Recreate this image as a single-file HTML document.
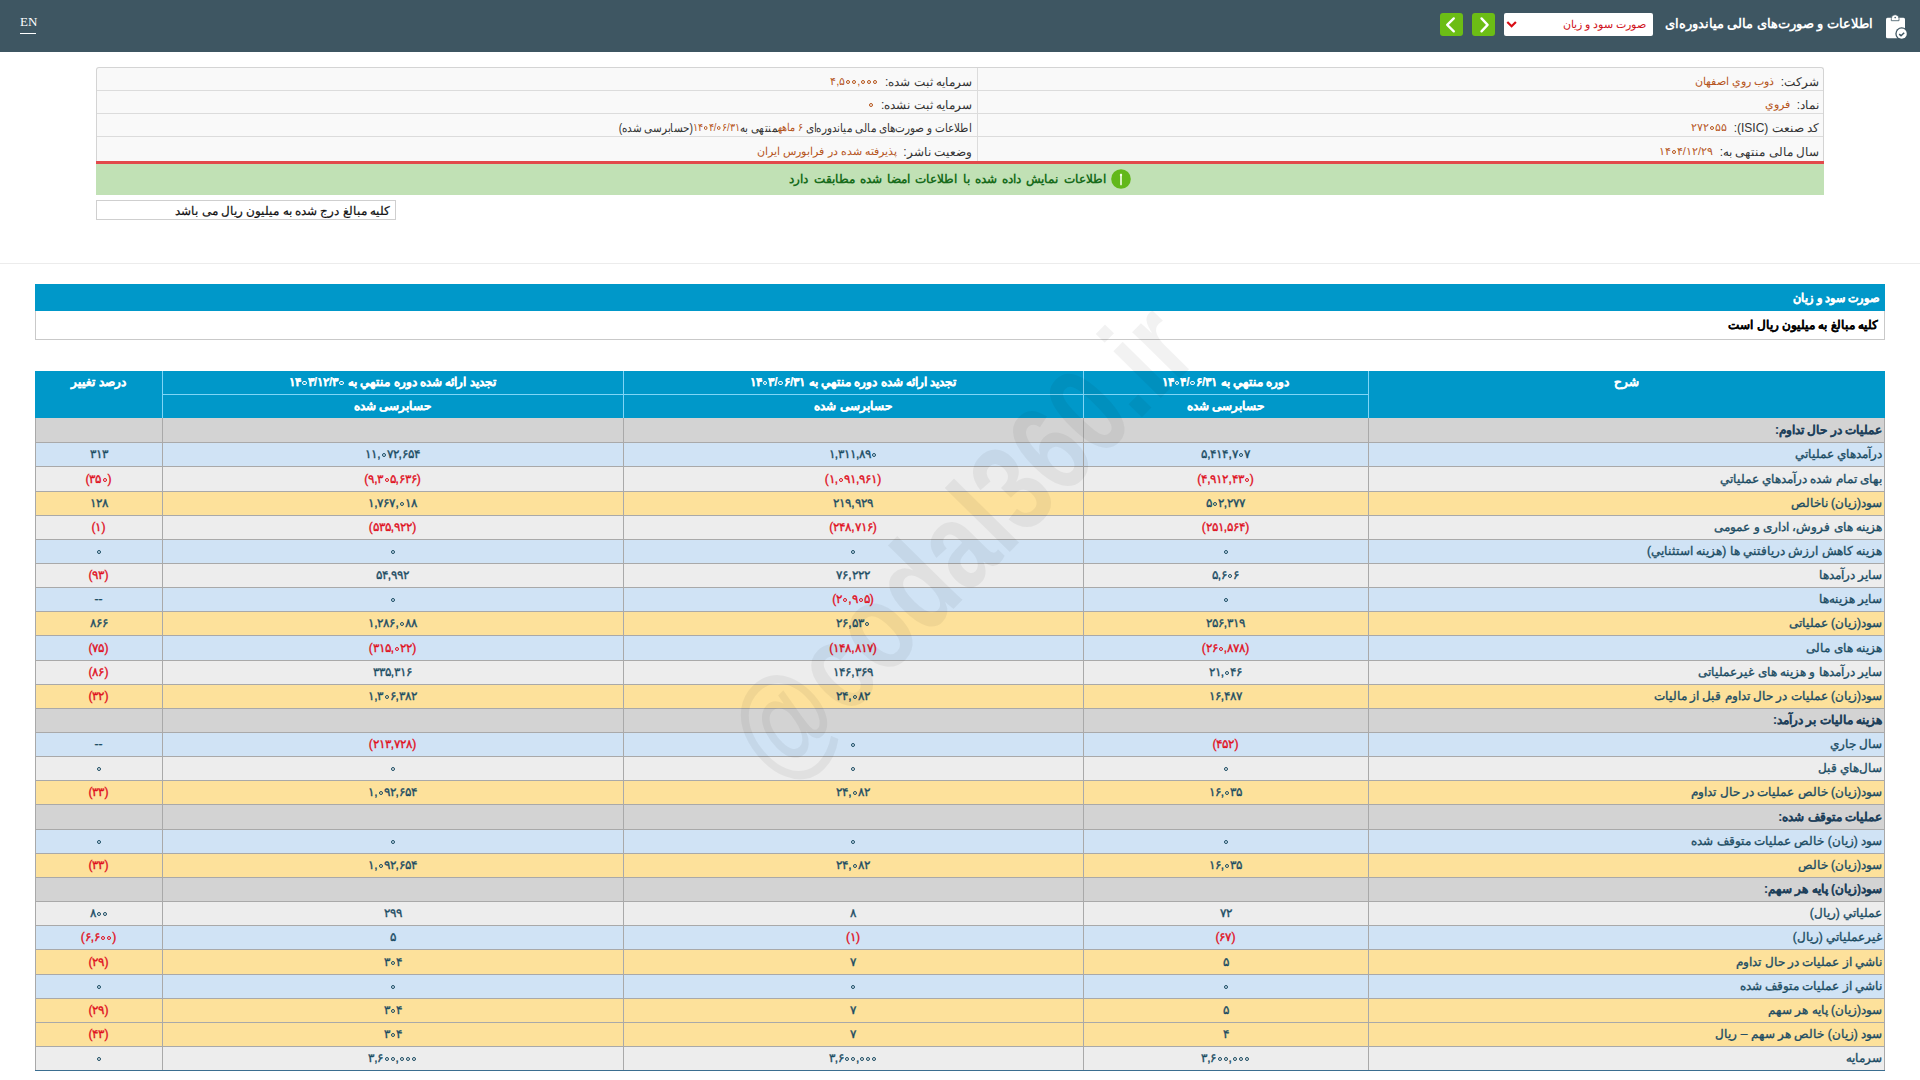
<!DOCTYPE html>
<html lang="fa" dir="rtl">
<head>
<meta charset="utf-8">
<title>صورت سود و زیان</title>
<style>
*{box-sizing:border-box;margin:0;padding:0}
html,body{width:1920px;height:1080px;overflow:hidden;background:#fff}
body{font-family:"Liberation Sans",sans-serif;font-size:12px;color:#222;position:relative}
.abs{position:absolute}
/* top bar */
#topbar{position:absolute;left:0;top:0;width:1920px;height:52px;background:#3e5662}
#en{position:absolute;left:20px;top:15px;line-height:14px;font-family:"Liberation Serif",serif;font-size:13px;color:#fff;direction:ltr}
#enline{position:absolute;left:20px;top:33px;width:16px;height:1px;background:#fff}
#ttl{position:absolute;right:47px;top:12px;font-size:13px;font-weight:bold;color:#fff;white-space:nowrap;line-height:24px}
#sel{position:absolute;left:1504px;top:13px;width:149px;height:23px;background:#fff;border-radius:2px}
#seltxt{position:absolute;right:7px;top:0;line-height:23px;font-size:11px;color:#d0101a;white-space:nowrap}
.gbtn{position:absolute;top:13px;width:23px;height:23px;background:#6cbd15;border-radius:3px}
/* info */
#info{position:absolute;left:96px;top:67px;width:1728px;height:97px;background:#f9f9f9;border:1px solid #d4d4d4;border-bottom:none;border-radius:3px 3px 0 0}
.ir{position:absolute;left:0;width:1726px;height:1px;background:#dcdcdc}
#ivd{position:absolute;left:880px;top:0;width:1px;height:96px;background:#dcdcdc}
.it{position:absolute;white-space:nowrap;font-size:12px;color:#333;line-height:23px;margin-top:1.5px}
.it .z{width:4px;height:4px;border-width:1.2px}
.br{color:#b5541a;font-size:11px;vertical-align:1px}
#red{position:absolute;left:96px;top:161px;width:1728px;height:3px;background:#e2494b}
#green{position:absolute;left:96px;top:164px;width:1728px;height:31px;background:#c1e1b5}
#gtxt{position:absolute;left:0;width:1728px;top:-0.5px;line-height:31px;text-align:center;font-size:12px;word-spacing:1.9px;font-weight:bold;color:#176c1b;white-space:nowrap}
#note{position:absolute;left:96px;top:200px;width:300px;height:20px;border:1px solid #cfcfcf;background:#fff}
#notetxt{position:absolute;right:5px;top:1px;line-height:18px;font-size:12px;color:#111;-webkit-text-stroke:0.2px #111;white-space:nowrap}
#sep{position:absolute;left:0;top:263px;width:1920px;height:1px;background:#ececec}
/* title */
#tbar{position:absolute;left:35px;top:284px;width:1850px;height:27px;background:#0098c9}
#tbartxt{position:absolute;right:6px;top:1px;line-height:27px;font-size:12px;font-weight:bold;color:#fff;-webkit-text-stroke:0.25px #fff;transform:scaleX(0.935);transform-origin:right center;white-space:nowrap}
#tsub{position:absolute;left:35px;top:311px;width:1850px;height:29px;border:1px solid #c9c9c9;border-top:none;background:#fff}
#tsubtxt{position:absolute;right:6px;top:0;line-height:28px;font-size:12px;font-weight:bold;color:#000;-webkit-text-stroke:0.1px #000;white-space:nowrap}
/* table */
#thead{position:absolute;left:35px;top:371px;width:1850px;height:47px;background:#0098c9}
.hl{position:absolute;background:#7fd5f6}
.ht .z{width:4.5px;height:4.5px;border-width:1.5px;vertical-align:1px}
.ht{position:absolute;color:#fff;font-weight:bold;font-size:12px;-webkit-text-stroke:0.2px #fff;text-align:center;white-space:nowrap;line-height:23px}
.row{position:absolute;left:35px;width:1850px}
.hb{position:absolute;left:35px;width:1850px;height:1px;background:#a9a9a9}
.z{display:inline-block;width:4px;height:4px;border:1.5px solid currentColor;border-radius:50%;vertical-align:1px;margin:0 1px}
.rg{background:#d3d3d3}
.rb{background:#d0e3f5}
.rl{background:#ededed}
.ry{background:#fde19b}
.c{position:absolute;top:0;height:100%;text-align:center;white-space:nowrap;color:#1b4c63;font-size:12px;-webkit-text-stroke:0.35px currentColor}
.c1{left:0;width:127px}
.c2{left:127px;width:461px}
.c3{left:588px;width:460px}
.c4{left:1048px;width:285px}
.c5{left:1333px;width:517px;text-align:right;padding-right:3px}
.c5 b{color:#1d3f5a;-webkit-text-stroke:0.15px currentColor}
.neg{color:#e0101e}
.vl{position:absolute;top:418px;height:652px;width:1px;background:#a9a9a9}
#tbot{position:absolute;left:35px;top:1070px;width:1850px;height:1px;background:#3b6e90}
#wm{position:absolute;left:960px;top:541px;transform:translate(-50%,-50%) rotate(-45.5deg) scaleX(0.77);font-size:126px;line-height:126px;font-weight:bold;color:rgba(0,0,0,0.052);white-space:nowrap;direction:ltr;font-family:"Liberation Sans",sans-serif}
</style>
</head>
<body>
<div id="topbar">
  <div id="en">EN</div><div id="enline"></div>
  <div id="ttl">اطلاعات و صورت‌های مالی میاندوره‌ای</div>
  <div id="sel"><div id="seltxt">صورت سود و زیان</div>
    <svg class="abs" style="left:2px;top:7px" width="11" height="9" viewBox="0 0 11 9"><path d="M1.3 2 L5.6 6.3 L9.9 2" stroke="#d80c14" stroke-width="2.2" fill="none"/></svg>
  </div>
  <div class="gbtn" style="left:1472px"><svg width="23" height="23" viewBox="0 0 23 23"><path d="M9.5 5.4 L15.6 11.9 L9.5 18.4" stroke="#fff" stroke-width="2.3" stroke-linecap="round" stroke-linejoin="round" fill="none"/></svg></div>
  <div class="gbtn" style="left:1440px"><svg width="23" height="23" viewBox="0 0 23 23"><path d="M13.8 5.4 L7.2 11.9 L13.8 18.4" stroke="#fff" stroke-width="2.3" stroke-linecap="round" stroke-linejoin="round" fill="none"/></svg></div>
  <svg class="abs" style="left:1876px;top:8px" width="40" height="36" viewBox="0 0 40 36">
    <rect x="10" y="9.7" width="19" height="20.6" rx="1.5" fill="#fff"/>
    <path d="M15.3 12.7 V10.5 a3.85 3.85 0 0 1 7.7 0 V12.7 z" fill="#fff" stroke="#3e5662" stroke-width="0.8"/>
    <circle cx="19.15" cy="9.6" r="0.8" fill="#3e5662"/>
    <circle cx="25.7" cy="25.7" r="6.4" fill="#3e5662"/>
    <circle cx="25.7" cy="25.7" r="5.1" fill="#fff"/>
    <path d="M23.2 26.2 l1.8 1.5 l3.2 -3" stroke="#3e5662" stroke-width="1.5" fill="none"/>
  </svg>
</div>

<div id="info">
  <div class="ir" style="top:22px"></div>
  <div class="ir" style="top:45px"></div>
  <div class="ir" style="top:68px"></div>
  <div id="ivd"></div>
  <div class="it" style="right:4px;top:0">شرکت: &nbsp;<span class="br">ذوب روي اصفهان</span></div>
  <div class="it" style="right:4px;top:23px">نماد: &nbsp;<span class="br">فروي</span></div>
  <div class="it" style="right:4px;top:46px">کد صنعت (ISIC): &nbsp;<span class="br"><bdo dir="ltr">۲۷۲<i class="z"></i>۵۵</bdo></span></div>
  <div class="it" style="right:4px;top:70px">سال مالی منتهی به: &nbsp;<span class="br"><bdo dir="ltr">۱۴<i class="z"></i>۴/۱۲/۲۹</bdo></span></div>
  <div class="it" style="right:851px;top:0">سرمایه ثبت شده: &nbsp;<span class="br"><bdo dir="ltr">۴,۵<i class="z"></i><i class="z"></i>,<i class="z"></i><i class="z"></i><i class="z"></i></bdo></span></div>
  <div class="it" style="right:851px;top:23px">سرمایه ثبت نشده: &nbsp;<span class="br"><i class="z"></i></span></div>
  <div class="it" style="right:851px;top:46px;transform:scaleX(0.87);transform-origin:right center">اطلاعات و صورت‌های مالی میاندوره‌ای <span class="br">۶ ماهه</span>منتهی به<span class="br"><bdo dir="ltr">۱۴<i class="z"></i>۴/<i class="z"></i>۶/۳۱</bdo></span>(حسابرسی شده)</div>
  <div class="it" style="right:851px;top:70px">وضعیت ناشر: &nbsp;<span class="br">پذیرفته شده در فرابورس ایران</span></div>
</div>
<div id="red"></div>
<div id="green"><div id="gtxt"><svg style="vertical-align:middle;margin-left:5px;position:relative;top:-0.5px" width="20" height="20" viewBox="0 0 20 20"><circle cx="10" cy="10" r="9.8" fill="#62b81a"/><path d="M10 5.6 V15.6" stroke="#f4ffe8" stroke-width="1.6" stroke-linecap="round"/><circle cx="10" cy="6" r="1.2" fill="#f4ffe8"/></svg>اطلاعات نمایش داده شده با اطلاعات امضا شده مطابقت دارد</div></div>
<div id="note"><div id="notetxt">کلیه مبالغ درج شده به میلیون ریال می باشد</div></div>
<div id="sep"></div>

<div id="tbar"><div id="tbartxt">صورت سود و زیان</div></div>
<div id="tsub"><div id="tsubtxt">کلیه مبالغ به میلیون ریال است</div></div>

<div id="thead">
  <div class="hl" style="left:127px;top:23px;width:1206px;height:1px"></div>
  <div class="hl" style="left:127px;top:0;width:1px;height:47px"></div>
  <div class="hl" style="left:588px;top:0;width:1px;height:47px"></div>
  <div class="hl" style="left:1048px;top:0;width:1px;height:47px"></div>
  <div class="hl" style="left:1333px;top:0;width:1px;height:47px"></div>
  <div class="ht" style="left:1333px;width:517px;top:0">شرح</div>
  <div class="ht" style="left:1048px;width:285px;top:0">دوره منتهي به <bdo dir="ltr">۱۴<i class="z"></i>۴/<i class="z"></i>۶/۳۱</bdo></div>
  <div class="ht" style="left:1048px;width:285px;top:24px">حسابرسی شده</div>
  <div class="ht" style="left:588px;width:460px;top:0">تجدید ارائه شده دوره منتهي به <bdo dir="ltr">۱۴<i class="z"></i>۳/<i class="z"></i>۶/۳۱</bdo></div>
  <div class="ht" style="left:588px;width:460px;top:24px">حسابرسی شده</div>
  <div class="ht" style="left:127px;width:461px;top:0">تجدید ارائه شده دوره منتهي به <bdo dir="ltr">۱۴<i class="z"></i>۳/۱۲/۳<i class="z"></i></bdo></div>
  <div class="ht" style="left:127px;width:461px;top:24px">حسابرسی شده</div>
  <div class="ht" style="left:0;width:127px;top:0">درصد تغییر</div>
</div>
<div class="row rg" style="top:418px;height:25px;line-height:24px"><div class="c c5"><b>عملیات در حال تداوم:</b></div><div class="c c4"></div><div class="c c3"></div><div class="c c2"></div><div class="c c1"></div></div>
<div class="hb" style="top:442px"></div>
<div class="row rb" style="top:443px;height:24px;line-height:23px"><div class="c c5">درآمدهاي عملياتي</div><div class="c c4"><bdo dir="ltr">۵,۴۱۴,۷<i class="z"></i>۷</bdo></div><div class="c c3"><bdo dir="ltr">۱,۳۱۱,۸۹<i class="z"></i></bdo></div><div class="c c2"><bdo dir="ltr">۱۱,<i class="z"></i>۷۲,۶۵۴</bdo></div><div class="c c1"><bdo dir="ltr">۳۱۳</bdo></div></div>
<div class="hb" style="top:466px"></div>
<div class="row rl" style="top:467px;height:25px;line-height:24px"><div class="c c5">بهای تمام شده درآمدهاي عملياتي</div><div class="c c4"><span class="neg"><bdo dir="ltr">(۴,۹۱۲,۴۳<i class="z"></i>)</bdo></span></div><div class="c c3"><span class="neg"><bdo dir="ltr">(۱,<i class="z"></i>۹۱,۹۶۱)</bdo></span></div><div class="c c2"><span class="neg"><bdo dir="ltr">(۹,۳<i class="z"></i>۵,۶۳۶)</bdo></span></div><div class="c c1"><span class="neg"><bdo dir="ltr">(۳۵<i class="z"></i>)</bdo></span></div></div>
<div class="hb" style="top:491px"></div>
<div class="row ry" style="top:492px;height:24px;line-height:23px"><div class="c c5">سود(زيان) ناخالص</div><div class="c c4"><bdo dir="ltr">۵<i class="z"></i>۲,۲۷۷</bdo></div><div class="c c3"><bdo dir="ltr">۲۱۹,۹۲۹</bdo></div><div class="c c2"><bdo dir="ltr">۱,۷۶۷,<i class="z"></i>۱۸</bdo></div><div class="c c1"><bdo dir="ltr">۱۲۸</bdo></div></div>
<div class="hb" style="top:515px"></div>
<div class="row rl" style="top:516px;height:24px;line-height:23px"><div class="c c5">هزینه های فروش، اداری و عمومی</div><div class="c c4"><span class="neg"><bdo dir="ltr">(۲۵۱,۵۶۴)</bdo></span></div><div class="c c3"><span class="neg"><bdo dir="ltr">(۲۴۸,۷۱۶)</bdo></span></div><div class="c c2"><span class="neg"><bdo dir="ltr">(۵۳۵,۹۲۲)</bdo></span></div><div class="c c1"><span class="neg"><bdo dir="ltr">(۱)</bdo></span></div></div>
<div class="hb" style="top:539px"></div>
<div class="row rb" style="top:540px;height:24px;line-height:23px"><div class="c c5">هزينه کاهش ارزش دريافتني ها (هزينه استثنايي)</div><div class="c c4"><bdo dir="ltr"><i class="z"></i></bdo></div><div class="c c3"><bdo dir="ltr"><i class="z"></i></bdo></div><div class="c c2"><bdo dir="ltr"><i class="z"></i></bdo></div><div class="c c1"><bdo dir="ltr"><i class="z"></i></bdo></div></div>
<div class="hb" style="top:563px"></div>
<div class="row rl" style="top:564px;height:24px;line-height:23px"><div class="c c5">ساير درآمدها</div><div class="c c4"><bdo dir="ltr">۵,۶<i class="z"></i>۶</bdo></div><div class="c c3"><bdo dir="ltr">۷۶,۲۲۲</bdo></div><div class="c c2"><bdo dir="ltr">۵۴,۹۹۲</bdo></div><div class="c c1"><span class="neg"><bdo dir="ltr">(۹۳)</bdo></span></div></div>
<div class="hb" style="top:587px"></div>
<div class="row rb" style="top:588px;height:24px;line-height:23px"><div class="c c5">ساير هزينه‌ها</div><div class="c c4"><bdo dir="ltr"><i class="z"></i></bdo></div><div class="c c3"><span class="neg"><bdo dir="ltr">(۲<i class="z"></i>,۹<i class="z"></i>۵)</bdo></span></div><div class="c c2"><bdo dir="ltr"><i class="z"></i></bdo></div><div class="c c1"><bdo dir="ltr">--</bdo></div></div>
<div class="hb" style="top:611px"></div>
<div class="row ry" style="top:612px;height:24px;line-height:23px"><div class="c c5">سود(زيان) عملياتى</div><div class="c c4"><bdo dir="ltr">۲۵۶,۳۱۹</bdo></div><div class="c c3"><bdo dir="ltr">۲۶,۵۳<i class="z"></i></bdo></div><div class="c c2"><bdo dir="ltr">۱,۲۸۶,<i class="z"></i>۸۸</bdo></div><div class="c c1"><bdo dir="ltr">۸۶۶</bdo></div></div>
<div class="hb" style="top:635px"></div>
<div class="row rb" style="top:636px;height:25px;line-height:24px"><div class="c c5">هزینه های مالی</div><div class="c c4"><span class="neg"><bdo dir="ltr">(۲۶<i class="z"></i>,۸۷۸)</bdo></span></div><div class="c c3"><span class="neg"><bdo dir="ltr">(۱۴۸,۸۱۷)</bdo></span></div><div class="c c2"><span class="neg"><bdo dir="ltr">(۳۱۵,<i class="z"></i>۲۲)</bdo></span></div><div class="c c1"><span class="neg"><bdo dir="ltr">(۷۵)</bdo></span></div></div>
<div class="hb" style="top:660px"></div>
<div class="row rl" style="top:661px;height:24px;line-height:23px"><div class="c c5">سایر درآمدها و هزینه های غیرعملیاتی</div><div class="c c4"><bdo dir="ltr">۲۱,<i class="z"></i>۴۶</bdo></div><div class="c c3"><bdo dir="ltr">۱۴۶,۳۶۹</bdo></div><div class="c c2"><bdo dir="ltr">۳۳۵,۳۱۶</bdo></div><div class="c c1"><span class="neg"><bdo dir="ltr">(۸۶)</bdo></span></div></div>
<div class="hb" style="top:684px"></div>
<div class="row ry" style="top:685px;height:24px;line-height:23px"><div class="c c5">سود(زيان) عمليات در حال تداوم قبل از ماليات</div><div class="c c4"><bdo dir="ltr">۱۶,۴۸۷</bdo></div><div class="c c3"><bdo dir="ltr">۲۴,<i class="z"></i>۸۲</bdo></div><div class="c c2"><bdo dir="ltr">۱,۳<i class="z"></i>۶,۳۸۲</bdo></div><div class="c c1"><span class="neg"><bdo dir="ltr">(۳۲)</bdo></span></div></div>
<div class="hb" style="top:708px"></div>
<div class="row rg" style="top:709px;height:24px;line-height:23px"><div class="c c5"><b>هزینه مالیات بر درآمد:</b></div><div class="c c4"></div><div class="c c3"></div><div class="c c2"></div><div class="c c1"></div></div>
<div class="hb" style="top:732px"></div>
<div class="row rb" style="top:733px;height:24px;line-height:23px"><div class="c c5">سال جاري</div><div class="c c4"><span class="neg"><bdo dir="ltr">(۴۵۲)</bdo></span></div><div class="c c3"><bdo dir="ltr"><i class="z"></i></bdo></div><div class="c c2"><span class="neg"><bdo dir="ltr">(۲۱۳,۷۲۸)</bdo></span></div><div class="c c1"><bdo dir="ltr">--</bdo></div></div>
<div class="hb" style="top:756px"></div>
<div class="row rl" style="top:757px;height:24px;line-height:23px"><div class="c c5">سال‌هاي قبل</div><div class="c c4"><bdo dir="ltr"><i class="z"></i></bdo></div><div class="c c3"><bdo dir="ltr"><i class="z"></i></bdo></div><div class="c c2"><bdo dir="ltr"><i class="z"></i></bdo></div><div class="c c1"><bdo dir="ltr"><i class="z"></i></bdo></div></div>
<div class="hb" style="top:780px"></div>
<div class="row ry" style="top:781px;height:24px;line-height:23px"><div class="c c5">سود(زيان) خالص عمليات در حال تداوم</div><div class="c c4"><bdo dir="ltr">۱۶,<i class="z"></i>۳۵</bdo></div><div class="c c3"><bdo dir="ltr">۲۴,<i class="z"></i>۸۲</bdo></div><div class="c c2"><bdo dir="ltr">۱,<i class="z"></i>۹۲,۶۵۴</bdo></div><div class="c c1"><span class="neg"><bdo dir="ltr">(۳۳)</bdo></span></div></div>
<div class="hb" style="top:804px"></div>
<div class="row rg" style="top:805px;height:25px;line-height:24px"><div class="c c5"><b>عملیات متوقف شده:</b></div><div class="c c4"></div><div class="c c3"></div><div class="c c2"></div><div class="c c1"></div></div>
<div class="hb" style="top:829px"></div>
<div class="row rb" style="top:830px;height:24px;line-height:23px"><div class="c c5">سود (زيان) خالص عمليات متوقف شده</div><div class="c c4"><bdo dir="ltr"><i class="z"></i></bdo></div><div class="c c3"><bdo dir="ltr"><i class="z"></i></bdo></div><div class="c c2"><bdo dir="ltr"><i class="z"></i></bdo></div><div class="c c1"><bdo dir="ltr"><i class="z"></i></bdo></div></div>
<div class="hb" style="top:853px"></div>
<div class="row ry" style="top:854px;height:24px;line-height:23px"><div class="c c5">سود(زيان) خالص</div><div class="c c4"><bdo dir="ltr">۱۶,<i class="z"></i>۳۵</bdo></div><div class="c c3"><bdo dir="ltr">۲۴,<i class="z"></i>۸۲</bdo></div><div class="c c2"><bdo dir="ltr">۱,<i class="z"></i>۹۲,۶۵۴</bdo></div><div class="c c1"><span class="neg"><bdo dir="ltr">(۳۳)</bdo></span></div></div>
<div class="hb" style="top:877px"></div>
<div class="row rg" style="top:878px;height:24px;line-height:23px"><div class="c c5"><b>سود(زيان) پايه هر سهم:</b></div><div class="c c4"></div><div class="c c3"></div><div class="c c2"></div><div class="c c1"></div></div>
<div class="hb" style="top:901px"></div>
<div class="row rl" style="top:902px;height:24px;line-height:23px"><div class="c c5">عملياتي (ريال)</div><div class="c c4"><bdo dir="ltr">۷۲</bdo></div><div class="c c3"><bdo dir="ltr">۸</bdo></div><div class="c c2"><bdo dir="ltr">۲۹۹</bdo></div><div class="c c1"><bdo dir="ltr">۸<i class="z"></i><i class="z"></i></bdo></div></div>
<div class="hb" style="top:925px"></div>
<div class="row rb" style="top:926px;height:24px;line-height:23px"><div class="c c5">غيرعملياتي (ريال)</div><div class="c c4"><span class="neg"><bdo dir="ltr">(۶۷)</bdo></span></div><div class="c c3"><span class="neg"><bdo dir="ltr">(۱)</bdo></span></div><div class="c c2"><bdo dir="ltr">۵</bdo></div><div class="c c1"><span class="neg"><bdo dir="ltr">(۶,۶<i class="z"></i><i class="z"></i>)</bdo></span></div></div>
<div class="hb" style="top:949px"></div>
<div class="row ry" style="top:950px;height:25px;line-height:24px"><div class="c c5">ناشي از عمليات در حال تداوم</div><div class="c c4"><bdo dir="ltr">۵</bdo></div><div class="c c3"><bdo dir="ltr">۷</bdo></div><div class="c c2"><bdo dir="ltr">۳<i class="z"></i>۴</bdo></div><div class="c c1"><span class="neg"><bdo dir="ltr">(۲۹)</bdo></span></div></div>
<div class="hb" style="top:974px"></div>
<div class="row rb" style="top:975px;height:24px;line-height:23px"><div class="c c5">ناشي از عمليات متوقف شده</div><div class="c c4"><bdo dir="ltr"><i class="z"></i></bdo></div><div class="c c3"><bdo dir="ltr"><i class="z"></i></bdo></div><div class="c c2"><bdo dir="ltr"><i class="z"></i></bdo></div><div class="c c1"><bdo dir="ltr"><i class="z"></i></bdo></div></div>
<div class="hb" style="top:998px"></div>
<div class="row ry" style="top:999px;height:24px;line-height:23px"><div class="c c5">سود(زيان) پايه هر سهم</div><div class="c c4"><bdo dir="ltr">۵</bdo></div><div class="c c3"><bdo dir="ltr">۷</bdo></div><div class="c c2"><bdo dir="ltr">۳<i class="z"></i>۴</bdo></div><div class="c c1"><span class="neg"><bdo dir="ltr">(۲۹)</bdo></span></div></div>
<div class="hb" style="top:1022px"></div>
<div class="row ry" style="top:1023px;height:24px;line-height:23px"><div class="c c5">سود (زيان) خالص هر سهم – ريال</div><div class="c c4"><bdo dir="ltr">۴</bdo></div><div class="c c3"><bdo dir="ltr">۷</bdo></div><div class="c c2"><bdo dir="ltr">۳<i class="z"></i>۴</bdo></div><div class="c c1"><span class="neg"><bdo dir="ltr">(۴۳)</bdo></span></div></div>
<div class="hb" style="top:1046px"></div>
<div class="row rl" style="top:1047px;height:24px;line-height:23px"><div class="c c5">سرمايه</div><div class="c c4"><bdo dir="ltr">۳,۶<i class="z"></i><i class="z"></i>,<i class="z"></i><i class="z"></i><i class="z"></i></bdo></div><div class="c c3"><bdo dir="ltr">۳,۶<i class="z"></i><i class="z"></i>,<i class="z"></i><i class="z"></i><i class="z"></i></bdo></div><div class="c c2"><bdo dir="ltr">۳,۶<i class="z"></i><i class="z"></i>,<i class="z"></i><i class="z"></i><i class="z"></i></bdo></div><div class="c c1"><bdo dir="ltr"><i class="z"></i></bdo></div></div>
<div class="vl" style="left:35px"></div>
<div class="vl" style="left:162px"></div>
<div class="vl" style="left:623px"></div>
<div class="vl" style="left:1083px"></div>
<div class="vl" style="left:1368px"></div>
<div class="vl" style="left:1884px"></div>
<div id="tbot"></div>
<div id="wm">@codal360.ir</div>
</body>
</html>
